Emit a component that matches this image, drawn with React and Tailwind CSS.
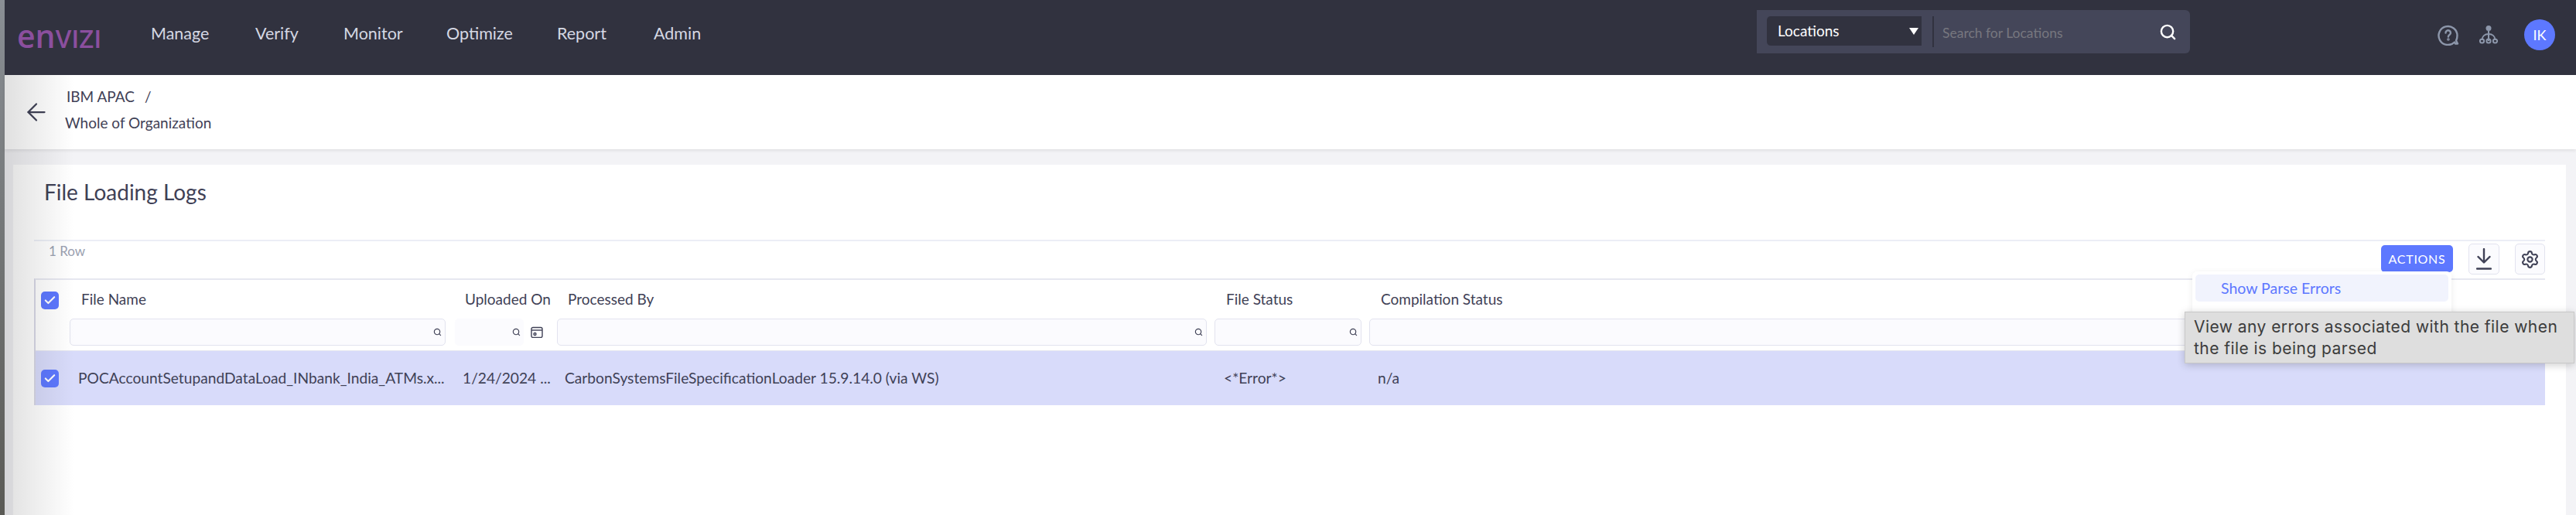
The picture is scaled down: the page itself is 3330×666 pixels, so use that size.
import React from "react";
import { Settings, ArrowLeft, Search, Check } from "lucide-react";

const NAV = [
  { label: "Manage", width: "w-[135px]" },
  { label: "Verify", width: "w-[114px]" },
  { label: "Monitor", width: "w-[133px]" },
  { label: "Optimize", width: "w-[143px]" },
  { label: "Report", width: "w-[125px]" },
  { label: "Admin", width: "w-[62px]" },
];

const COLUMNS = [
  { title: "File Name", width: "w-[498px]", input: "w-[486px]", head: "pl-[15px]", cell: "pl-[11px]" },
  { title: "Uploaded On", width: "w-[132px]", input: "w-[89px]", head: "pl-[13px]", cell: "pl-[10px]" },
  { title: "Processed By", width: "w-[850px]", input: "w-[840px]", head: "pl-[14px]", cell: "pl-[10px]" },
  { title: "File Status", width: "w-[200px]", input: "w-[190px]", head: "pl-[15px]", cell: "pl-[12px]" },
  { title: "Compilation Status", width: "w-[1070px]", input: "w-[1070px]", head: "pl-[15px]", cell: "pl-[11px]" },
];

const ROW = [
  "POCAccountSetupandDataLoad_INbank_India_ATMs.x...",
  "1/24/2024 ...",
  "CarbonSystemsFileSpecificationLoader 15.9.14.0 (via WS)",
  "<*Error*>",
  "n/a",
];

const Tick = () => (
  <div className="w-[23px] h-[23px] rounded-[5px] bg-[#5d78ff] flex items-center justify-center">
    <Check className="w-[17px] h-[17px] text-white" strokeWidth={3} />
  </div>
);

const HelpIcon = () => (
  <svg width="28" height="27" viewBox="0 0 28 27" fill="none" stroke="#8d97ab" strokeWidth="2.4">
    <path d="M22 22.5A12 12 0 1 1 25.5 14c0 2.5-.5 4.5-1.5 6.5l2 4h-3z" strokeLinejoin="round" />
    <path d="M10.5 10.5a3.2 3.2 0 1 1 5 2.6c-1 .7-1.6 1.2-1.6 2.4" strokeLinecap="round" />
    <circle cx="13.9" cy="19" r="0.6" fill="#8d97ab" />
  </svg>
);

const OrgIcon = () => (
  <svg width="24" height="24" viewBox="0 0 24 24" fill="none" stroke="#8d97ab" strokeWidth="2">
    <circle cx="12" cy="3.5" r="3.5" fill="#8d97ab" stroke="none" />
    <path d="M12 7v13" />
    <path d="M3.5 19c0-5 3.5-8 8.5-8s8.5 3 8.5 8" />
    <circle cx="3.5" cy="20" r="2.6" />
    <circle cx="12" cy="20" r="2.6" />
    <circle cx="20.5" cy="20" r="2.6" />
  </svg>
);

const CalendarIcon = () => (
  <svg width="16" height="15" viewBox="0 0 16 15" fill="none" stroke="#3f4156" strokeWidth="1.4">
    <rect x="1" y="1.5" width="14" height="13" rx="2" />
    <path d="M1 5h14" />
    <circle cx="5.5" cy="10" r="1.5" />
  </svg>
);

const DownloadIcon = () => (
  <svg width="20" height="28" viewBox="0 0 20 28" fill="none" stroke="#3f4156" strokeWidth="2.4" strokeLinecap="round" strokeLinejoin="round">
    <path d="M10 1v17M2.5 11l7.5 7.5 7.5-7.5M1 26.5h18" />
  </svg>
);

const FilterInput = ({ width, plain }) => (
  <div className={`${width} h-[35px] flex items-center justify-end pr-[4px] rounded-[5px] bg-[#fbfbfe] ${plain ? "" : "border border-[#e2e3ef]"}`}>
    <Search className="w-[11px] h-[11px] text-[#3f4156]" strokeWidth={2.5} />
  </div>
);

export default function App() {
  return (
    <div className="relative flex w-[3330px] h-[666px] overflow-hidden bg-[#f3f3f6] font-['Lato',sans-serif] text-[#3f4156]">
      {/* strip of the window behind */}
      <div className="w-[6px] shrink-0 bg-gradient-to-b from-[#8a8f95] to-[#5a5a55]" />

      <div className="flex-1 flex flex-col min-w-0">
        <header className="h-[97px] shrink-0 bg-[#31323f] flex items-center">
          <div className="w-[189px] pl-[16px] pb-[5px] flex items-baseline text-[#8b4f9e] leading-none font-semibold font-['Open_Sans',sans-serif]">
            <span className="text-[41px]">en</span>
            <span className="text-[33px]">VIZI</span>
          </div>
          <nav className="flex items-center text-[21.5px] text-[#d5d8e3] pb-[10px]">
            {NAV.map((item) => (
              <span key={item.label} className={item.width}>
                {item.label}
              </span>
            ))}
          </nav>

          <div className="ml-auto mr-[499px] w-[560px] h-[56px] mb-[15px] bg-[#444659] rounded-r-[6px] flex items-start pt-[8px] pl-[13px]">
            <div className="w-[200px] h-[38px] bg-[#31323f] rounded-l-[5px] flex items-center justify-between pl-[14px] pr-[4px] pt-[1px] text-[19px] text-white">
              <span>Locations</span>
              <svg width="12" height="9" viewBox="0 0 12 9" fill="white">
                <path d="M0 0h12L6 9z" />
              </svg>
            </div>
            <div className="w-[2px] h-[40px] ml-[14px] bg-[#31323f]" />
            <span className="ml-[11px] mt-[11px] text-[17.5px] leading-[22px] text-[#77777f]">Search for Locations</span>
            <Search className="ml-auto mr-[17px] mt-[9px] w-[23px] h-[23px] text-white" strokeWidth={2.5} />
          </div>
        </header>

        <div className="h-[96px] shrink-0 bg-white shadow-[0_2px_4px_rgba(0,0,0,0.08)] flex items-center pl-[23px]">
          <ArrowLeft className="w-[36px] h-[36px] text-[#3f4156]" strokeWidth={1.5} />
          <div className="ml-[19px] mb-[6px] flex flex-col gap-[12px] text-[19px] leading-[22px]">
            <span className="pl-[2px]">
              IBM APAC <span className="ml-[8px]">/</span>
            </span>
            <span>Whole of Organization</span>
          </div>
        </div>

        <main className="flex-1 pt-[20px] pl-[11px] pr-[13px]">
          <div className="h-full bg-white pl-[27px] pr-[27px]">
            <div className="h-[97px] pl-[13px] pt-[19px] text-[28px] leading-[32px]">File Loading Logs</div>

            <div className="h-[50px] border-t-2 border-[#eceef6] pl-[19px] pt-[3px] flex items-start justify-between">
              <span className="text-[17px] leading-[20px] text-[#9aa0b0]">1 Row</span>
              <div className="flex items-start gap-[20px]">
                <button className="w-[93px] h-[35px] mt-[2px] rounded-[5px] bg-[#5d78ff] text-white text-[16px] tracking-[0.7px]">
                  ACTIONS
                </button>
                <button className="w-[40px] h-[40px] rounded-[5px] bg-[#fbfbfe] border border-[#e2e3ef] flex items-center justify-center">
                  <DownloadIcon />
                </button>
                <button className="w-[39px] h-[40px] rounded-[5px] bg-[#fbfbfe] border border-[#e2e3ef] flex items-center justify-center">
                  <Settings className="w-[25px] h-[25px] text-[#3f4156]" strokeWidth={2} />
                </button>
              </div>
            </div>

            <div className="border-l-2 border-[#d8d8e6] border-t-2 border-t-[#e6e7f0]">
              <div className="h-[92px] border-b border-[#e6e7f0] flex">
                <div className="w-[44px] shrink-0 pl-[7px] pt-[15px]">
                  <Tick />
                </div>
                {COLUMNS.map((col) => (
                  <div key={col.title} className={`${col.width} shrink-0 flex flex-col`}>
                    <div className={`${col.head} pt-[14px] text-[19px] leading-[22px]`}>{col.title}</div>
                    <div className="mt-[14px] flex items-center">
                      <FilterInput width={col.input} plain={col.title === "Uploaded On"} />
                      {col.title === "Uploaded On" && (
                        <span className="ml-[9px]">
                          <CalendarIcon />
                        </span>
                      )}
                    </div>
                  </div>
                ))}
              </div>
              <div className="h-[70px] bg-[#d8dbfa] flex items-center">
                <div className="w-[44px] shrink-0 pl-[7px]">
                  <Tick />
                </div>
                {COLUMNS.map((col, i) => (
                  <div key={col.title} className={`${col.width} ${col.cell} shrink-0 text-[19.2px] whitespace-nowrap`}>
                    {ROW[i]}
                  </div>
                ))}
              </div>
            </div>
          </div>
        </main>
      </div>

      {/* user icons, pinned over the top bar */}
      <div className="absolute top-[25px] left-[3151px] flex items-center">
        <HelpIcon />
        <span className="ml-[26px]">
          <OrgIcon />
        </span>
        <div className="ml-[34px] w-[40px] h-[40px] rounded-full bg-[#5d78ff] text-white text-[18px] flex items-center justify-center">IK</div>
      </div>

      {/* actions menu */}
      <div className="absolute left-[2834px] top-[351px] w-[335px] h-[85px] bg-white rounded-[6px] shadow-[0_2px_8px_rgba(0,0,0,0.08)] p-[4px]">
        <div className="h-[35px] rounded-[5px] bg-[#f1f3fd] pl-[33px] flex items-center text-[19.5px] text-[#5d78ff]">Show Parse Errors</div>
        <div className="h-[35px] pl-[33px] mt-[2px] flex items-center text-[19.5px]">Show Load Errors</div>
      </div>

      {/* tooltip */}
      <div className="absolute left-[2824px] top-[403px] w-[504px] h-[67px] bg-[#dedede] border border-[#c8c8c8] shadow-[0_2px_10px_rgba(0,0,0,0.2)] pl-[11px] pt-[5px] font-['Inter',sans-serif] text-[21px] tracking-[0.45px] leading-[28px] text-[#3c3c3c] whitespace-nowrap">
        View any errors associated with the file when
        <br />
        the file is being parsed
      </div>

      {/* soft shadow along the left edge */}
      <div className="absolute left-[6px] top-[97px] bottom-0 w-[90px] bg-gradient-to-r from-[#0000001f] to-transparent pointer-events-none" />
    </div>
  );
}
